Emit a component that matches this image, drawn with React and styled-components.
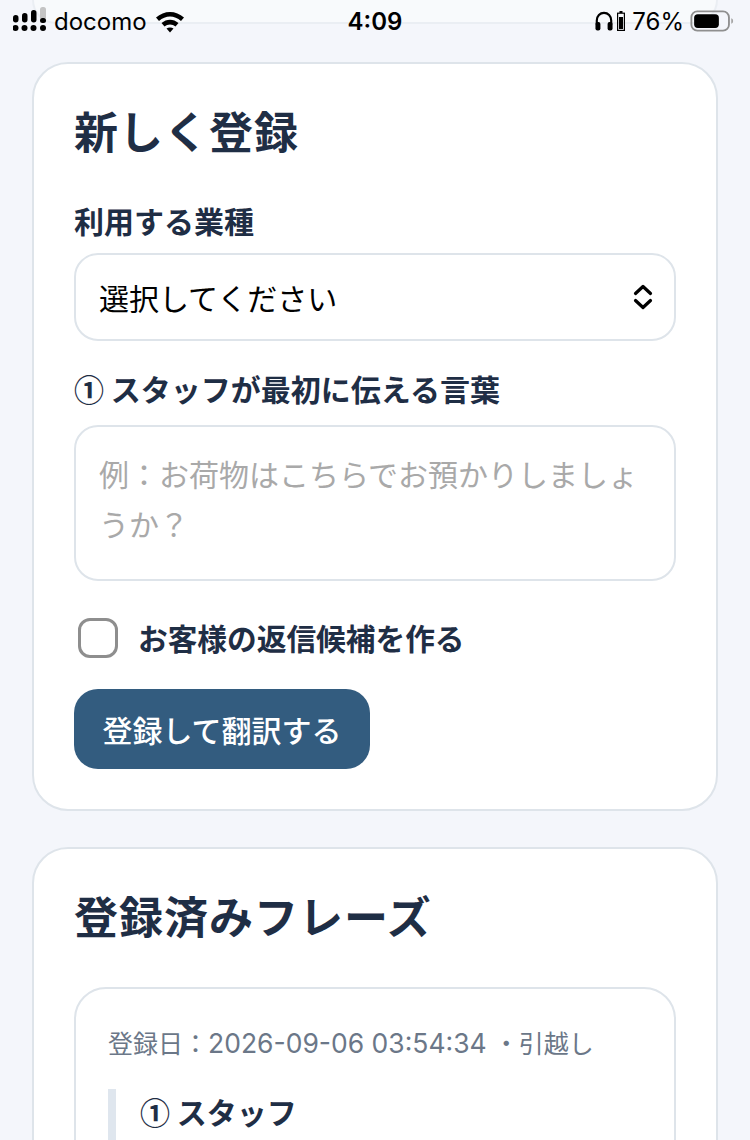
import React from "react";
import styled, { createGlobalStyle } from "styled-components";

const GlobalStyle = createGlobalStyle`
  html, body {
    margin: 0;
    padding: 0;
    background: #f4f6fb;
    height: 1140px;
    overflow: hidden;
    font-family: "Noto Sans CJK JP", "Noto Sans", sans-serif;
  }
`;

const Page = styled.div`
  position: relative;
  width: 750px;
  height: 1140px;
  overflow: hidden;
`;

const StatusBar = styled.div`
  position: absolute;
  top: 0;
  left: 0;
  right: 0;
  height: 42px;
  padding: 0 16px;
  display: grid;
  grid-template-columns: 1fr auto 1fr;
  align-items: center;
  color: #000;
  font-family: Inter, "Liberation Sans", sans-serif;
`;

const StatusLeft = styled.div`
  display: flex;
  align-items: center;
  gap: 6px;
  margin-left: -3px;
`;

const StatusRight = styled.div`
  display: flex;
  align-items: center;
  justify-content: flex-end;
  gap: 4px;
`;

const Carrier = styled.span`
  font-size: 24px;
  margin-right: 2px;
  margin-left: -1px;
`;

const Clock = styled.span`
  font-size: 24px;
  font-weight: 600;
`;

const Percent = styled.span`
  font-size: 24px;
  margin: 0 2px 0 3px;
`;

const Content = styled.div`
  display: flex;
  flex-direction: column;
  padding: 0 32px;
`;

const PreviousCard = styled.div`
  height: 24px;
  box-sizing: border-box;
  border: 2px solid #e0e5ea;
  border-top: none;
  border-radius: 0 0 32px 32px;
  background: #fff;
  margin-bottom: 38px;
  opacity: 0.45;
`;

const Card = styled.section`
  box-sizing: border-box;
  background: #fff;
  border: 2px solid #dee4ea;
  border-radius: 36px;
  padding: 36px 40px 40px;
  margin-bottom: 36px;
`;

const Title = styled.h2`
  margin: 0 0 ${(p) => p.$gap}px;
  font-size: 44px;
  line-height: 60px;
  font-weight: 700;
  letter-spacing: 1px;
  color: #1f2e45;
`;

const FieldLabel = styled.label`
  display: block;
  margin-bottom: ${(p) => p.$gap}px;
  font-size: 30px;
  line-height: 42px;
  font-weight: 700;
  color: #1f2e45;
`;

const SelectBox = styled.div`
  box-sizing: border-box;
  height: 88px;
  margin-bottom: 26px;
  padding: 0 21px 0 23px;
  display: flex;
  align-items: center;
  justify-content: space-between;
  border: 2px solid #dee4ea;
  border-radius: 24px;
  font-size: 30px;
  color: #000;
`;

const TextBox = styled.div`
  box-sizing: border-box;
  height: 156px;
  margin-bottom: 35px;
  padding: 21px 23px;
  border: 2px solid #dee4ea;
  border-radius: 24px;
  font-size: 30px;
  line-height: 50px;
  color: #a9a9a9;
`;

const CheckRow = styled.div`
  display: flex;
  align-items: center;
  gap: 20px;
  margin-bottom: 29px;
  padding-left: 4px;
`;

const CheckBox = styled.span`
  box-sizing: border-box;
  width: 40px;
  height: 40px;
  border: 3px solid #8e8e8e;
  border-radius: 12px;
`;

const CheckLabel = styled.span`
  font-size: 29.7px;
  line-height: 44px;
  font-weight: 700;
  color: #1f2e45;
`;

const SubmitButton = styled.button`
  display: block;
  width: 296px;
  height: 80px;
  padding: 0;
  border: none;
  border-radius: 24px;
  background: #335c7f;
  color: #fff;
  font-family: inherit;
  font-size: 30px;
  font-weight: 500;
`;

const PhraseCard = styled.div`
  box-sizing: border-box;
  border: 2px solid #dee4ea;
  border-radius: 32px;
  padding: 36px 32px;
`;

const Meta = styled.div`
  font-family: Inter, "Noto Sans CJK JP", sans-serif;
  font-size: 25px;
  line-height: 36px;
  color: #6b7788;
  margin-bottom: 27px;
`;

const MetaDate = styled.span`
  font-size: 26.500px;
`;

const Quote = styled.div`
  border-left: 8px solid #dfe6ee;
  padding: 1px 0 40px 24px;
`;

const QuoteLabel = styled.div`
  font-size: 30px;
  line-height: 42px;
  font-weight: 700;
  color: #1f2e45;
`;

function SignalIcon() {
  return (
    <svg width="36" height="36" viewBox="0 0 36 36">
      <g fill="#000">
        <circle cx="2.500" cy="25" r="3" />
        <circle cx="11.500" cy="25" r="3" />
        <circle cx="20.500" cy="25" r="3" />
        <circle cx="30" cy="25" r="3" />
        <rect x="0" y="12" width="5.500" height="7.500" rx="2.700" />
        <rect x="9" y="10" width="5.500" height="9.500" rx="2.700" />
        <rect x="18" y="7" width="5.500" height="12.500" rx="2.700" />
      </g>
      <rect x="27" y="4" width="6" height="13" rx="2.500" fill="#c4c4c4" />
      <rect x="27" y="15" width="6" height="5" rx="2.500" fill="#000" />
    </svg>
  );
}

function WifiIcon() {
  return (
    <svg width="30" height="24" viewBox="0 0 30 24">
      <path d="M1 8.5C9 1 21 1 29 8.5L26 12C19.500 6 10.500 6 4 12Z" fill="#000" />
      <path d="M6.500 14C11.500 9.500 18.500 9.500 23.500 14L20.500 17.500C17.500 14.700 12.500 14.700 9.500 17.500Z" fill="#000" />
      <path d="M11.500 19.500C13.500 18 16.500 18 18.500 19.500L15 23.500Z" fill="#000" />
    </svg>
  );
}

function HeadphonesIcon() {
  return (
    <svg width="18" height="20" viewBox="0 0 20 22" fill="none">
      <path d="M2 15V10.500C2 5.500 5.500 2 10 2C14.500 2 18 5.500 18 10.500V15" stroke="#000" strokeWidth="2.400" />
      <rect x="0.500" y="12" width="5.500" height="9.500" rx="2.200" fill="#000" />
      <rect x="14" y="12" width="5.500" height="9.500" rx="2.200" fill="#000" />
    </svg>
  );
}

function SmallBattery() {
  return (
    <svg width="8" height="20" viewBox="0 0 8 20">
      <rect x="2.500" y="0" width="3" height="2" fill="#000" />
      <rect x="0.600" y="2.200" width="6.800" height="17.200" fill="none" stroke="#000" strokeWidth="1.200" />
      <rect x="2" y="6" width="4" height="12" fill="#000" />
    </svg>
  );
}

function BatteryIcon() {
  return (
    <svg width="44" height="22" viewBox="0 0 48 24">
      <rect x="1.500" y="1.500" width="41" height="21" rx="6.500" fill="none" stroke="#8f8f8f" strokeWidth="2" />
      <rect x="4.500" y="4.500" width="27" height="15" rx="4" fill="#000" />
      <path d="M45 9C46.500 9.500 47 10.500 47 12C47 13.500 46.500 14.500 45 15Z" fill="#a5a5a5" />
    </svg>
  );
}

function ChevronsIcon() {
  return (
    <svg width="20" height="26" viewBox="0 0 20 26" fill="none" stroke="#000" strokeWidth="3.200" strokeLinecap="round" strokeLinejoin="round">
      <path d="M2.500 9.500L10 2.500L17.500 9.500" />
      <path d="M2.500 16.500L10 23.500L17.500 16.500" />
    </svg>
  );
}

export default function App() {
  return (
    <Page>
      <GlobalStyle />
      <Content>
        <PreviousCard />
        <Card>
          <Title $gap={39}>新しく登録</Title>
          <FieldLabel $gap={12}>利用する業種</FieldLabel>
          <SelectBox>
            選択してください
            <ChevronsIcon />
          </SelectBox>
          <FieldLabel $gap={16}>① スタッフが最初に伝える言葉</FieldLabel>
          <TextBox>例：お荷物はこちらでお預かりしましょうか？</TextBox>
          <CheckRow>
            <CheckBox />
            <CheckLabel>お客様の返信候補を作る</CheckLabel>
          </CheckRow>
          <SubmitButton>登録して翻訳する</SubmitButton>
        </Card>
        <Card>
          <Title $gap={42}>登録済みフレーズ</Title>
          <PhraseCard>
            <Meta>
              登録日：<MetaDate>2026-09-06 03:54:34</MetaDate> ・引越し
            </Meta>
            <Quote>
              <QuoteLabel>① スタッフ</QuoteLabel>
            </Quote>
          </PhraseCard>
        </Card>
      </Content>
      <StatusBar>
        <StatusLeft>
          <SignalIcon />
          <Carrier>docomo</Carrier>
          <WifiIcon />
        </StatusLeft>
        <Clock>4:09</Clock>
        <StatusRight>
          <HeadphonesIcon />
          <SmallBattery />
          <Percent>76%</Percent>
          <BatteryIcon />
        </StatusRight>
      </StatusBar>
    </Page>
  );
}
